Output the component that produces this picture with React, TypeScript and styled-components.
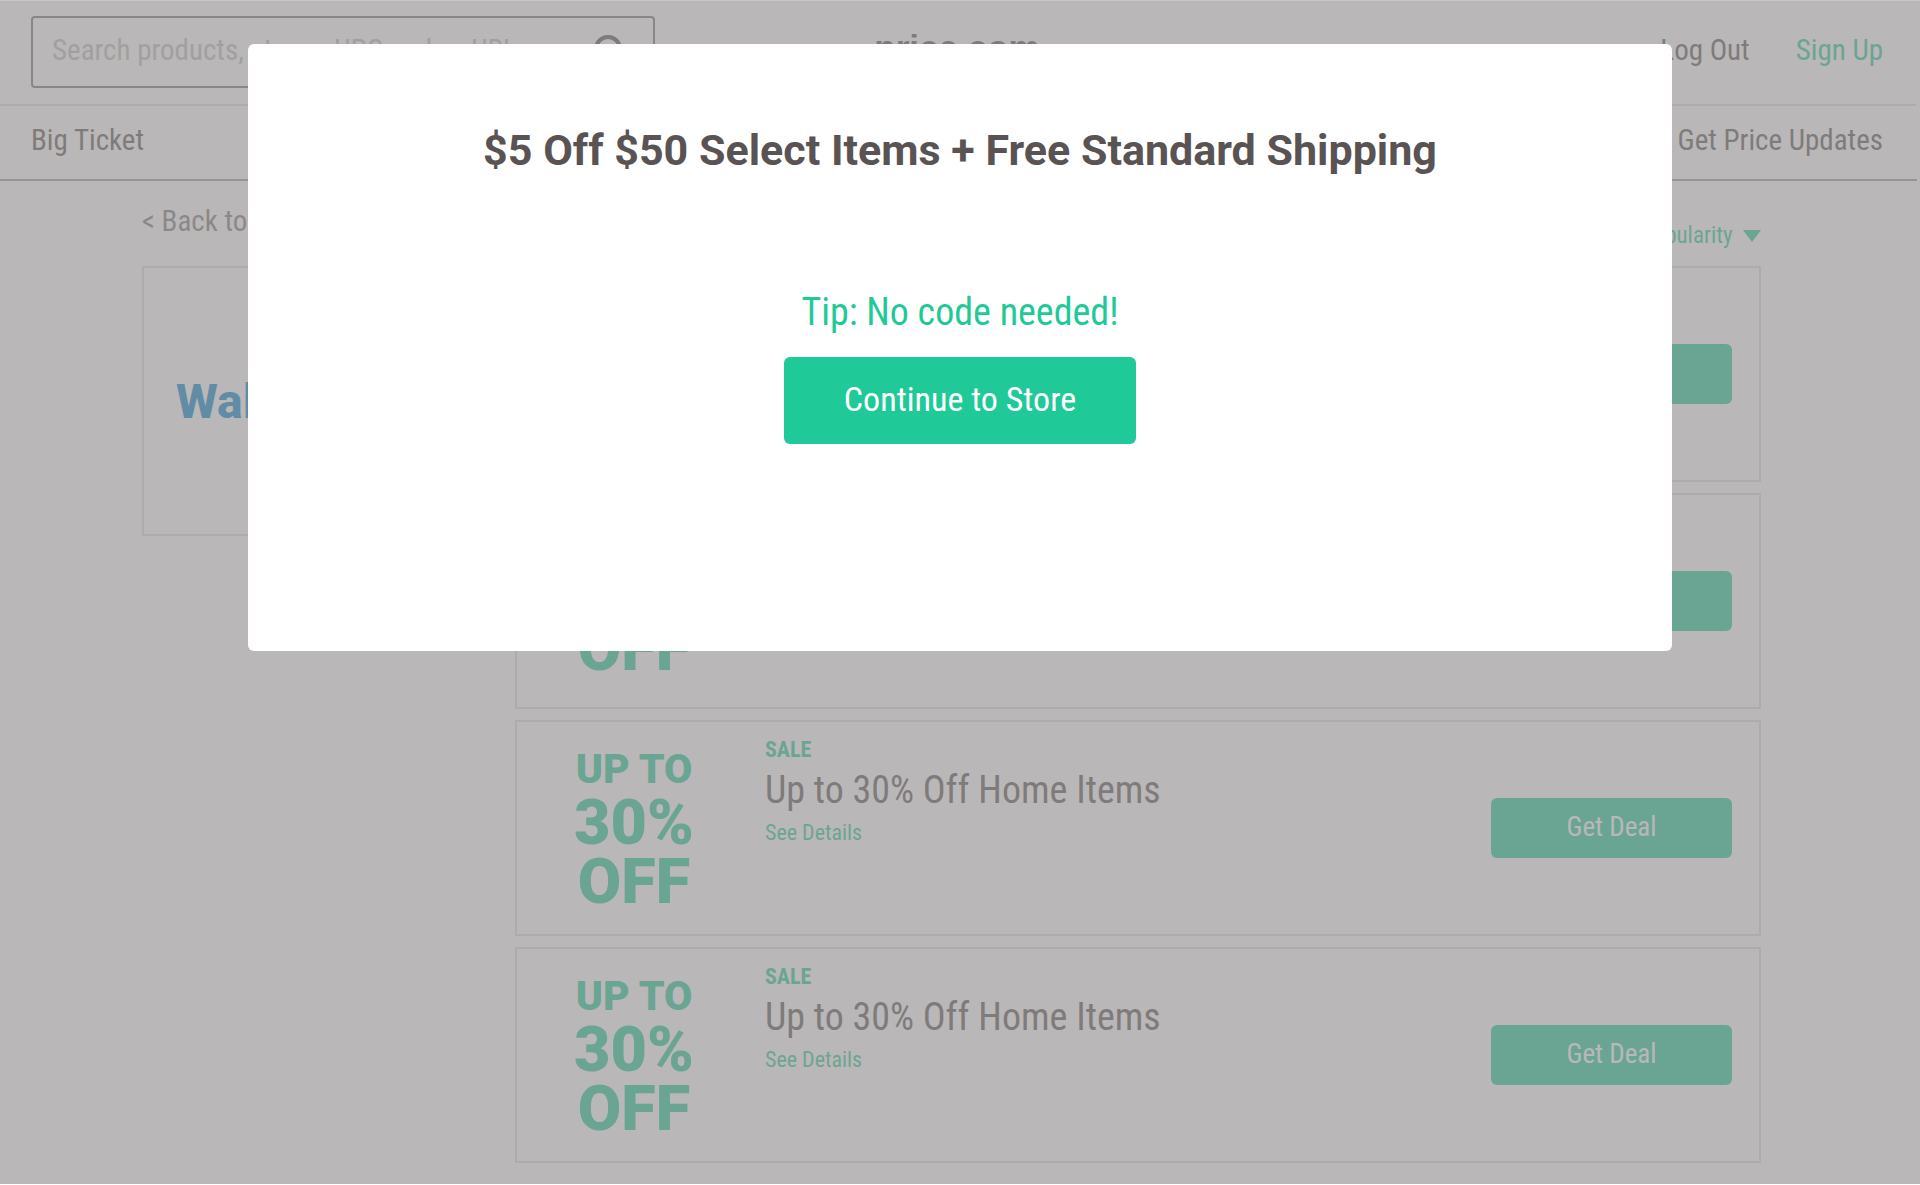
import React from "react";
import styled, { createGlobalStyle } from "styled-components";

const GlobalStyle = createGlobalStyle`
  *, *::before, *::after { box-sizing: border-box; }
  body {
    margin: 0;
    background: #fff;
    color: #5a5353;
    font-family: "Roboto Condensed", Roboto, sans-serif;
    font-size: 29px;
    line-height: 36px;
  }
  button, input, select { font: inherit; }
  h1, h2, p { margin: 0; }
`;

const Page = styled.div`
  min-height: 100vh;
  overflow: hidden;
`;

const Header = styled.header`
  display: grid;
  grid-template-columns: 1fr auto 1fr;
  align-items: center;
  height: 106px;
  margin-right: 4px;
  padding: 0 33px 0 31px;
  border-bottom: 2px solid #dcdcdc;
`;

const SearchBox = styled.form`
  display: flex;
  align-items: center;
  width: 100%;
  max-width: 624px;
  height: 72px;
  padding: 0 26px 0 19px;
  border: 2px solid #787474;
  border-radius: 4px;
`;

const SearchInput = styled.input`
  flex: 1;
  min-width: 0;
  height: 56px;
  padding: 0 0 4px;
  border: 0;
  outline: 0;
  background: none;
  color: #5a5353;

  &::placeholder {
    color: #bcbab8;
    opacity: 1;
  }
`;

const IconButton = styled.button`
  display: flex;
  padding: 0;
  border: 0;
  background: none;
  color: #5a5353;
`;

const Logo = styled.a`
  padding-bottom: 8px;
  color: #5a5353;
  font: bold 35px/44px "Liberation Sans", Arial, sans-serif;
  text-decoration: none;
`;

const Links = styled.nav`
  display: flex;
  justify-content: flex-end;
  gap: 46px;
  padding-bottom: 4px;
`;

const TextLink = styled.a<{ $tone?: "green" | "soft" }>`
  color: ${({ $tone }) =>
    $tone === "green" ? "#1fc998" : $tone === "soft" ? "#7e7a7a" : "#5a5353"};
  text-decoration: none;
`;

const SubNav = styled.nav`
  display: flex;
  align-items: center;
  justify-content: space-between;
  height: 75px;
  margin-right: 3px;
  padding: 0 34px 6px 31px;
  border-bottom: 2px solid #9d9999;
`;

const Content = styled.main`
  padding: 22px 159px 22px 142px;
`;

const Toolbar = styled.div`
  display: flex;
  justify-content: space-between;
  height: 63px;
`;

const SortLabel = styled.label`
  display: flex;
  align-items: center;
  gap: 10px;
  height: 36px;
  margin-top: 15px;
  color: #1fc998;
  font-size: 23px;
`;

const SortSelect = styled.select`
  appearance: none;
  padding: 0;
  border: 0;
  background: none;
  color: inherit;
`;

const Columns = styled.div`
  display: grid;
  grid-template-columns: 338px 1fr;
  align-items: start;
  gap: 35px;
`;

const StoreCard = styled.aside`
  display: flex;
  align-items: center;
  height: 270px;
  padding: 2px 0 0 32px;
  border: 2px solid #dcdcdc;
  color: #0083ce;
  font: 800 48px/56px Roboto, sans-serif;
`;

const DealList = styled.div`
  display: flex;
  flex-direction: column;
  gap: 11px;
`;

const DealCard = styled.article`
  display: grid;
  grid-template-columns: 234px 1fr 241px;
  column-gap: 14px;
  height: 216px;
  padding-right: 27px;
  border: 2px solid #dcdcdc;
`;

const Badge = styled.div<{ $raised?: boolean }>`
  padding-top: ${({ $raised }) => ($raised ? 17 : 23)}px;
  color: #1fc998;
  font-family: Roboto, sans-serif;
  font-size: 63px;
  font-weight: 900;
  line-height: 59px;
  text-align: center;
`;

const BadgeLead = styled.div`
  font-size: 41px;
  line-height: 48px;
`;

const DealInfo = styled.div`
  padding-top: 14px;
`;

const DealKind = styled.p`
  color: #1fc998;
  font-size: 22px;
  font-weight: 700;
  line-height: 28px;
`;

const DealTitle = styled.h2`
  font-size: 38px;
  font-weight: 400;
  line-height: 52px;
`;

const DetailsLink = styled(TextLink)`
  display: block;
  font-size: 22px;
  line-height: 34px;
`;

const GreenButton = styled.button`
  border: 0;
  border-radius: 6px;
  background: #1fc998;
  color: #fff;
  cursor: pointer;
`;

const DealButton = styled(GreenButton)`
  align-self: center;
  height: 60px;
  padding: 0 0 2px;
  font-size: 27px;
`;

const Overlay = styled.div`
  position: fixed;
  inset: 0 0 1px;
  padding: 43px 248px 0;
  border-top: 1px solid #c8c6c7;
  background: rgba(147, 144, 145, 0.65);
  background-clip: padding-box;
`;

const Dialog = styled.section`
  display: flex;
  flex-direction: column;
  align-items: center;
  height: 607px;
  border-radius: 6px;
  background: #fff;
  text-align: center;
`;

const DialogTitle = styled.h1`
  margin-top: 78px;
  font-family: Roboto, sans-serif;
  font-size: 43px;
  line-height: 56px;
`;

const Tip = styled.p`
  margin-top: 109px;
  color: #1fc998;
  font-size: 38px;
  line-height: 50px;
`;

const ContinueButton = styled(GreenButton)`
  width: 352px;
  height: 87px;
  margin-top: 20px;
  padding: 0 0 4px;
  font-size: 34px;
`;

type Deal = { lead: string; amount: string; title: string; raised?: boolean };

const homeDeal: Deal = {
  lead: "UP TO",
  amount: "30%",
  title: "Up to 30% Off Home Items",
};

const raisedDeal: Deal = { ...homeDeal, raised: true };

const deals: Deal[] = [raisedDeal, raisedDeal, homeDeal, homeDeal];

const SearchIcon = () => (
  <svg width="36" height="36" viewBox="0 0 36 36" fill="none" stroke="currentColor" strokeWidth="4" aria-hidden="true">
    <circle cx="17" cy="15" r="12" />
    <path d="M25 23l9 10" />
  </svg>
);

const CaretIcon = () => (
  <svg width="18" height="12" viewBox="0 0 18 12" aria-hidden="true">
    <path d="M0 0h18L9 12z" fill="currentColor" />
  </svg>
);

const DealRow = ({ lead, amount, title, raised }: Deal) => (
  <DealCard>
    <Badge $raised={raised}>
      <BadgeLead>{lead}</BadgeLead>
      <div>{amount}</div>
      <div>OFF</div>
    </Badge>
    <DealInfo>
      <DealKind>SALE</DealKind>
      <DealTitle>{title}</DealTitle>
      <DetailsLink href="#details" $tone="green">See Details</DetailsLink>
    </DealInfo>
    <DealButton type="button">Get Deal</DealButton>
  </DealCard>
);

export default function App() {
  return (
    <>
      <GlobalStyle />
      <Page>
        <Header>
          <SearchBox>
            <SearchInput
              type="search"
              aria-label="Search"
              placeholder="Search products, stores, UPC codes, URL"
            />
            <IconButton type="submit" aria-label="Search">
              <SearchIcon />
            </IconButton>
          </SearchBox>
          <Logo href="#home">price.com</Logo>
          <Links>
            <TextLink href="#logout">Log Out</TextLink>
            <TextLink href="#signup" $tone="green">Sign Up</TextLink>
          </Links>
        </Header>
        <SubNav>
          <TextLink href="#big-ticket">Big Ticket</TextLink>
          <TextLink href="#updates">Get Price Updates</TextLink>
        </SubNav>
        <Content>
          <Toolbar>
            <TextLink href="#stores" $tone="soft">&lt; Back to Stores</TextLink>
            <SortLabel>
              <SortSelect aria-label="Sort by">
                <option>Popularity</option>
              </SortSelect>
              <CaretIcon />
            </SortLabel>
          </Toolbar>
          <Columns>
            <StoreCard>Walmart</StoreCard>
            <DealList>
              {deals.map((deal, index) => (
                <DealRow key={index} {...deal} />
              ))}
            </DealList>
          </Columns>
        </Content>
      </Page>
      <Overlay>
        <Dialog role="dialog" aria-modal="true" aria-labelledby="dialog-title">
          <DialogTitle id="dialog-title">$5 Off $50 Select Items + Free Standard Shipping</DialogTitle>
          <Tip>Tip: No code needed!</Tip>
          <ContinueButton type="button">Continue to Store</ContinueButton>
        </Dialog>
      </Overlay>
    </>
  );
}
